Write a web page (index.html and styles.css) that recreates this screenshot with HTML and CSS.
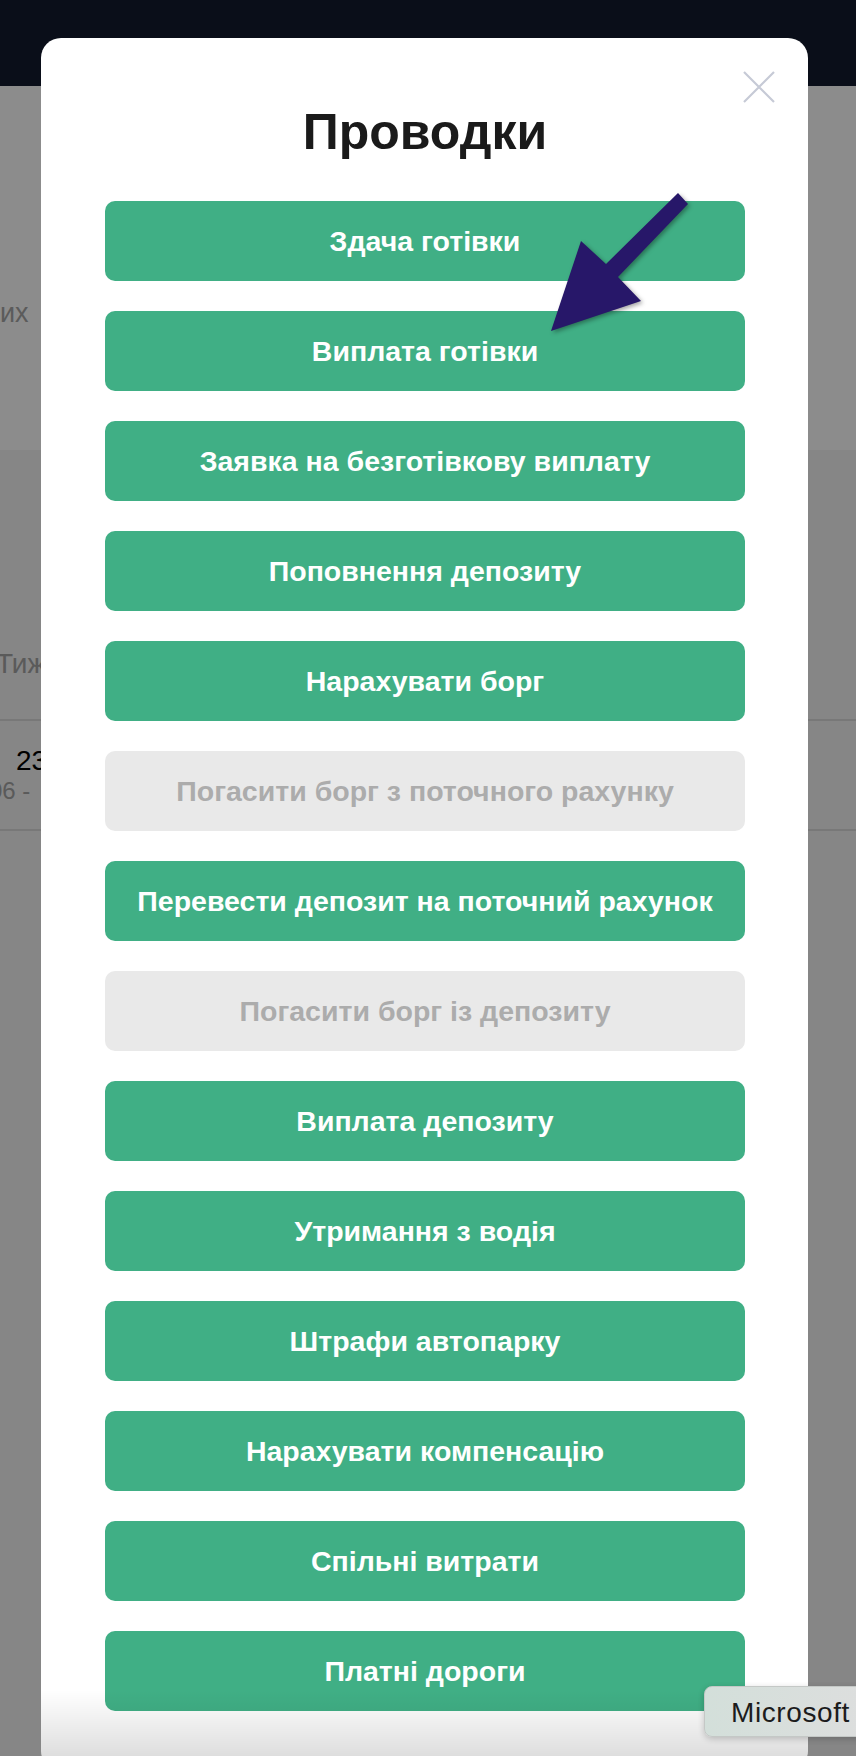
FILE: index.html
```html
<!DOCTYPE html>
<html lang="uk">
<head>
    <meta charset="UTF-8">
    <meta name="viewport" content="width=device-width, initial-scale=1.0">
    <title>Проводки</title>
    <link rel="stylesheet" href="styles.css">
</head>
<body>
    <header class="topbar"></header>
    <main class="page">
        <section class="summary">
            <span class="summary-label">их</span>
        </section>
        <div class="week-head">Тиж</div>
        <div class="week-row">
            <div class="week-num">23</div>
            <div class="week-dates">06 -</div>
        </div>
    </main>

    <div class="overlay">
        <div class="modal">
            <button class="modal-close" aria-label="Закрити">
                <svg width="34" height="34" viewBox="0 0 34 34">
                    <path d="M2 2 L32 32 M32 2 L2 32" stroke="#c6cad6" stroke-width="2.2" fill="none"/>
                </svg>
            </button>
            <h1 class="modal-title">Проводки</h1>
            <div class="action-list">
                <button class="action">Здача готівки</button>
                <button class="action">Виплата готівки</button>
                <button class="action">Заявка на безготівкову виплату</button>
                <button class="action">Поповнення депозиту</button>
                <button class="action">Нарахувати борг</button>
                <button class="action" disabled>Погасити борг з поточного рахунку</button>
                <button class="action">Перевести депозит на поточний рахунок</button>
                <button class="action" disabled>Погасити борг із депозиту</button>
                <button class="action">Виплата депозиту</button>
                <button class="action">Утримання з водія</button>
                <button class="action">Штрафи автопарку</button>
                <button class="action">Нарахувати компенсацію</button>
                <button class="action">Спільні витрати</button>
                <button class="action">Платні дороги</button>
            </div>
        </div>
        <div class="modal-fade"></div>
    </div>

    <svg class="pointer-arrow" width="856" height="400" viewBox="0 0 856 400">
        <polygon points="678,193 688,204 618,277 641,301 551,331 581,241 606,264" fill="#271769"/>
    </svg>

    <div class="tooltip">Microsoft</div>
</body>
</html>
```

FILE: styles.css
```css
html, body {
    margin: 0;
    height: 1756px;
    overflow: hidden;
}
body {
    background-color: #f4f4f4;
    font-family: "Liberation Sans", Arial, sans-serif;
    position: relative;
}
.topbar {
    height: 86px;
    background-color: #131a2f;
}
.summary {
    height: 364px;
    box-sizing: border-box;
    padding-top: 212px;
    background-color: #fff;
}
.summary-label {
    font-size: 27px;
    line-height: 30px;
    color: #a6a6a6;
}
.week-head {
    margin-top: 198px;
    font-size: 28px;
    line-height: 32px;
    color: #a4a4a4;
    margin-left: -4px;
    padding-bottom: 39px;
    border-bottom: 2px solid #dadada;
}
.week-row {
    padding: 24px 0 24px;
    border-bottom: 2px solid #dadada;
}
.week-num {
    font-size: 28px;
    line-height: 32px;
    color: #000;
    padding-left: 16px;
}
.week-dates {
    font-size: 24px;
    line-height: 28px;
    color: #a4a4a4;
    margin-left: -11px;
}

.overlay {
    position: absolute;
    top: 0;
    left: 0;
    right: 0;
    bottom: 0;
    background-color: rgba(0, 0, 0, 0.45);
    padding: 38px 0 0 41px;
    overflow: hidden;
}
.modal {
    position: relative;
    width: 767px;
    box-sizing: border-box;
    padding: 66px 63px 60px 64px;
    background-color: #fff;
    border-radius: 20px;
}
.modal-close {
    position: absolute;
    top: 32px;
    right: 32px;
    padding: 0;
    border: none;
    background: none;
    cursor: pointer;
    line-height: 0;
}
.modal-title {
    margin: 0 0 40px;
    text-align: center;
    font-size: 50px;
    line-height: 57px;
    font-weight: bold;
    color: #1a1a1a;
}
.action-list {
    display: flex;
    flex-direction: column;
    gap: 30px;
}
.action {
    height: 80px;
    border: none;
    border-radius: 10px;
    background-color: #40af85;
    color: #fff;
    font-family: "Liberation Sans", Arial, sans-serif;
    font-size: 28.5px;
    font-weight: bold;
    cursor: pointer;
}
.action:disabled {
    background-color: #e9e9e9;
    color: #acacac;
    cursor: default;
}
.modal-fade {
    position: absolute;
    left: 41px;
    width: 767px;
    bottom: 0;
    height: 66px;
    background: linear-gradient(rgba(0, 0, 0, 0), rgba(0, 0, 0, 0.13));
}

.pointer-arrow {
    position: absolute;
    top: 0;
    left: 0;
    filter: drop-shadow(2px 2px 2px rgba(0, 0, 0, 0.35));
}
.tooltip {
    position: absolute;
    left: 704px;
    top: 1686px;
    width: 180px;
    height: 51px;
    box-sizing: border-box;
    padding-left: 26px;
    line-height: 51px;
    font-size: 28px;
    letter-spacing: 0.6px;
    color: #1c1c1c;
    background: linear-gradient(90deg, #d3dfda, #dedede);
    border: 1px solid #c4c8c6;
    border-radius: 8px;
    box-shadow: 0 2px 6px rgba(0, 0, 0, 0.2);
    white-space: nowrap;
}
```
